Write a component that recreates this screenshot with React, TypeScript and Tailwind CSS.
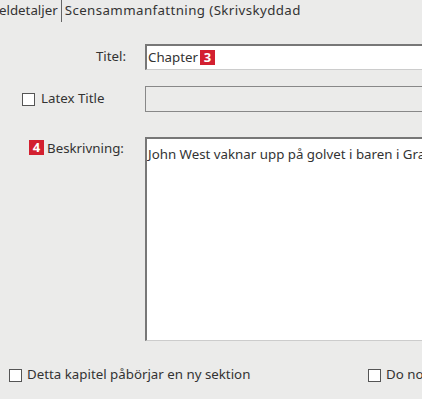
import React from "react";

function Box() {
  return <span className="inline-block shrink-0 w-[13px] h-[13px] border border-[#555] bg-white" />;
}

function Badge({ n }: { n: string }) {
  return (
    <span className="inline-flex shrink-0 items-center justify-center w-[15px] h-[15px] bg-[#d32030] text-white font-bold text-[13px] leading-none">
      {n}
    </span>
  );
}

export default function App() {
  return (
    <div
      className="w-[422px] h-[399px] bg-[#ebebea] text-[#333] text-[13.3px] overflow-hidden"
      style={{ fontFamily: '"Noto Sans", "Open Sans", sans-serif' }}
    >
      <div className="flex items-center h-[22px] whitespace-nowrap">
        <span className="ml-[-1px] pr-[3px]">eldetaljer</span>
        <span className="w-[1px] h-[22px] bg-[#666]" />
        <span className="pl-[3px] tracking-[0.4px]">Scensammanfattning (Skrivskyddad</span>
      </div>

      <div className="flex items-center mt-[22px] h-[26px]">
        <div className="w-[126px] shrink-0 text-right">Titel:</div>
        <div className="ml-[19px] w-[300px] shrink-0 h-[26px] bg-white border-t-[2px] border-l-[2px] border-[#777] border-b border-b-[#ccc] flex items-center pl-[1px] gap-[2px] whitespace-nowrap">
          <span>Chapter</span>
          <Badge n="3" />
        </div>
      </div>

      <div className="flex items-center mt-[16px] h-[26px]">
        <div className="w-[145px] shrink-0 flex items-center pl-[22px] gap-[6px] whitespace-nowrap">
          <Box />
          <span>Latex Title</span>
        </div>
        <div className="w-[300px] shrink-0 h-[26px] border border-[#888] bg-[#ebebea]" />
      </div>

      <div className="flex mt-[25px]">
        <div className="w-[145px] shrink-0 flex items-start pl-[29px] pt-[3px] gap-[3px] whitespace-nowrap">
          <Badge n="4" />
          <span className="leading-[16px]">Beskrivning:</span>
        </div>
        <div className="w-[300px] shrink-0 h-[204px] bg-white border-t-[2px] border-l-[2px] border-[#777] border-b border-b-[#ccc] pl-[1px] pt-[7px] whitespace-nowrap leading-[16px] overflow-hidden">
          John West vaknar upp på golvet i baren i Grand Hotel
        </div>
      </div>

      <div className="flex items-center mt-[26px] h-[16px] whitespace-nowrap">
        <div className="flex items-center pl-[9px] gap-[5px] w-[368px] shrink-0">
          <Box />
          <span>Detta kapitel påbörjar en ny sektion</span>
        </div>
        <div className="flex items-center gap-[5px] shrink-0">
          <Box />
          <span>Do not</span>
        </div>
      </div>
    </div>
  );
}
